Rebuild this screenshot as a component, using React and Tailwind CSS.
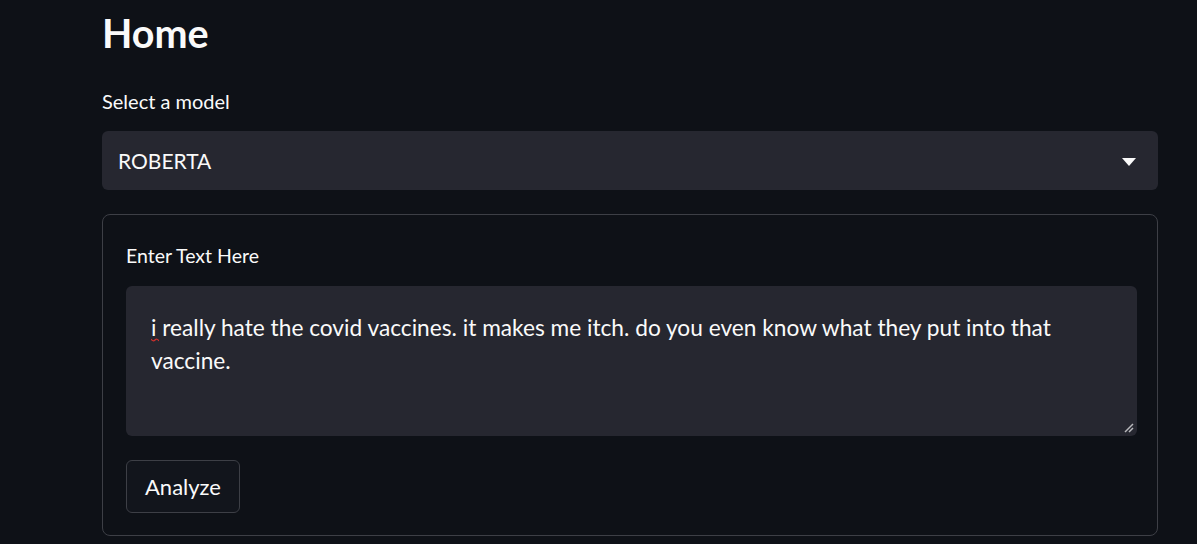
export default function App() {
  return (
    <div
      className="min-h-screen w-full bg-[#0e1117] text-[#fafafa] overflow-hidden"
      style={{ fontFamily: 'Lato, "Noto Sans", sans-serif' }}
    >
      <main className="pl-[102px] pr-[39px]">
        {/* Title */}
        <h1 className="pt-[8px] text-[39.5px] font-bold leading-[50px]">Home</h1>

        {/* Model select */}
        <div className="mt-[30px]">
          <label className="block text-[20px] leading-[26px] text-[#fafafa]">Select a model</label>
          <div className="mt-[17px] h-[59px] rounded-md bg-[#262730] flex items-center pl-4 pr-5">
            <span className="flex-1 text-[21px]">ROBERTA</span>
            <svg width="16" height="10" viewBox="0 0 16 10" className="mr-[1px] mt-[2px]">
              <path d="M1 1 L15 1 L8 9 Z" fill="#fafafa" />
            </svg>
          </div>
        </div>

        {/* Form */}
        <div className="mt-[24px] rounded-lg border border-[#3d3f46] pl-[23px] pr-[20px] pt-[28px] pb-[22px]">
          <label className="block text-[19.5px] leading-[26px]">Enter Text Here</label>
          <div className="relative mt-[17px] h-[150px] rounded-md bg-[#262730] pl-[25px] pr-6 pt-[25px] text-[22.7px] leading-[33px]">
            <p>i really hate the covid vaccines. it makes me itch. do you even know what they put into that vaccine.</p>
            {/* spellcheck squiggle under the "i" */}
            <svg width="8" height="4" viewBox="0 0 8 4" className="absolute left-[25px] top-[52px]">
              <path d="M0 1 Q2 4 4 2 Q6 0 8 3" stroke="#d0312d" strokeWidth="1.2" fill="none" />
            </svg>
            <svg width="10" height="10" viewBox="0 0 10 10" className="absolute right-[3px] bottom-[3px]">
              <path d="M9 1 L1 9 M9 5 L5 9" stroke="#b8b8bc" strokeWidth="1.5" />
            </svg>
          </div>
          <button className="mt-[24px] h-[53px] w-[114px] rounded-md border border-[#3d3f46] bg-[#12151c] text-[22px]">
            Analyze
          </button>
        </div>
      </main>
    </div>
  )
}
